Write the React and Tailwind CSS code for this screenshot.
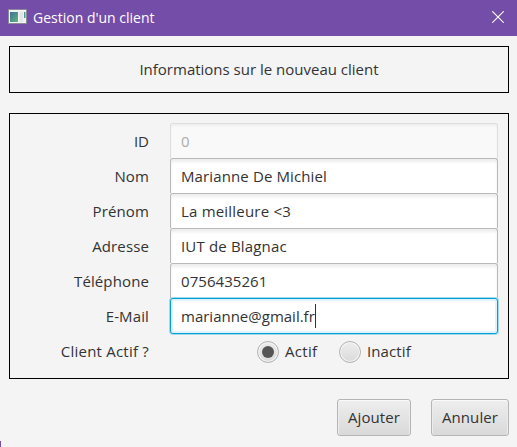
import React from "react";

const fields = [
  { label: "Nom", value: "Marianne De Michiel", tracking: "tracking-[0.12px]" },
  { label: "Prénom", value: "La meilleure <3", tracking: "tracking-[0.2px]" },
  { label: "Adresse", value: "IUT de Blagnac", tracking: "tracking-[0.17px]" },
  { label: "Téléphone", value: "0756435261", tracking: "tracking-[0.05px]" },
];

function Row({ label, labelClass = "", children }) {
  return (
    <div className="flex h-[35px]">
      <div className={"flex w-[139px] items-center justify-end pt-px " + labelClass}>{label}</div>
      <div className="ml-[21px] flex w-[328px]">{children}</div>
    </div>
  );
}

function Radio({ label, checked, textClass }) {
  return (
    <div className="flex items-center">
      <span className="flex size-[22px] items-center justify-center rounded-full border border-[#b4b4b4] bg-linear-to-b from-[#ededed] to-[#dadada] shadow-[inset_0_0_0_1px_#f6f6f6]">
        {checked && <span className="size-[12px] rounded-full bg-[#555]" />}
      </span>
      <span className={"ml-1.5 pb-px " + textClass}>{label}</span>
    </div>
  );
}

function Button({ className, children }) {
  return (
    <button
      className={
        "flex h-[37px] items-center justify-center rounded-[3px] border border-[#b5b5b5] bg-linear-to-b from-[#eeeeee] to-[#d9d9d9] pb-px shadow-[inset_0_1px_0_#fbfbfb,inset_1px_0_0_#ececec,inset_-1px_0_0_#ececec] " +
        className
      }
    >
      {children}
    </button>
  );
}

export default function App() {
  return (
    <div className="flex h-[447px] w-[517px] flex-col overflow-hidden bg-[#f4f4f4] font-['Open_Sans','Noto_Sans',sans-serif] text-[15px] leading-5 whitespace-nowrap text-[#333]">
      <header className="flex h-9 shrink-0 items-center bg-[#744da9] pl-2 text-white">
        <svg className="-mt-[3px]" width="19" height="16" viewBox="0 0 19 16">
          <defs>
            <linearGradient id="pane" x1="0" y1="0" x2="1" y2="1">
              <stop offset="0" stopColor="#3d7099" />
              <stop offset="1" stopColor="#61b57c" />
            </linearGradient>
          </defs>
          <rect x="0.5" y="0.5" width="18" height="14" fill="#f2f2f2" stroke="#8c8a98" strokeWidth="1" />
          <rect x="2" y="3" width="8" height="10" fill="url(#pane)" />
          <rect x="11.5" y="3" width="3.5" height="10" fill="#e2e4e6" />
          <rect x="16" y="3" width="1.5" height="6" fill="#4f9597" />
        </svg>
        <span className="ml-1.5 text-[14px]">Gestion d'un client</span>
        <svg className="mr-[13px] -mt-0.5 ml-auto" width="12" height="12" viewBox="0 0 12 12" stroke="#fff" strokeWidth="1.1">
          <path d="M0.3 0.3 L11.7 11.7 M11.7 0.3 L0.3 11.7" />
        </svg>
      </header>

      <div className="mt-2.5 ml-[9px] flex h-[47px] w-[500px] shrink-0 items-center justify-center border border-black pb-px">
        <span>Informations sur le nouveau client</span>
      </div>

      <div className="mt-5 ml-[9px] h-[266px] w-[500px] shrink-0 border border-black pt-[9px]">
        <Row label="ID">
          <div className="flex grow items-center rounded-t-[3px] border border-b-0 border-[#dedede] bg-[#f9f9f9] pb-px pl-2.5 text-[#adadad] shadow-[inset_0_2px_2px_#efefef]">
            0
          </div>
        </Row>
        {fields.map((f) => (
          <Row key={f.label} label={f.label} labelClass="tracking-[0.12px]">
            <div className="flex grow items-center rounded-t-[3px] border border-b-0 border-[#b9b9b9] bg-white pb-px pl-2.5 shadow-[inset_0_3px_3px_#eeeeee]">
              <span className={f.tracking}>{f.value}</span>
            </div>
          </Row>
        ))}
        <Row label="E-Mail" labelClass="tracking-[0.12px]">
          <div className="flex h-9 grow items-center rounded-[3px] border border-[#039ed3] bg-white pl-2.5 shadow-[inset_0_0_0_2px_#e1f3fa,0_0_0_1px_#a5d9ec]">
            <span>marianne@gmail.fr</span>
            <span className="h-6 w-px bg-[#333]" />
          </div>
        </Row>
        <Row label="Client Actif ?" labelClass="tracking-[0.22px]">
          <div className="flex items-center gap-5 pt-0.5 pl-[87px]">
            <Radio label="Actif" textClass="w-[34px] tracking-[0.3px]" checked />
            <Radio label="Inactif" textClass="tracking-[0.1px]" />
          </div>
        </Row>
      </div>

      <footer className="flex grow">
        <span className="mt-[62px] h-1.5 w-px bg-[#744da9]" />
        <div className="mt-5 mr-2 ml-auto flex gap-5">
          <Button className="w-[74px] tracking-[0.1px]">Ajouter</Button>
          <Button className="w-[78px] tracking-[0.1px]">Annuler</Button>
        </div>
      </footer>
    </div>
  );
}
